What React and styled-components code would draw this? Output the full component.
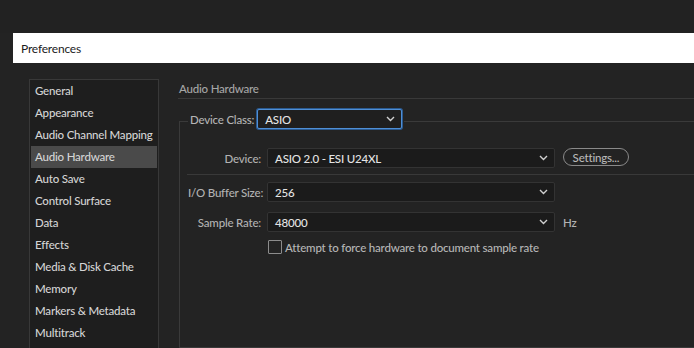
import React from "react";
import styled, { createGlobalStyle } from "styled-components";

const Global = createGlobalStyle`
  html, body { margin: 0; padding: 0; background: #222222; overflow: hidden; }
  body {
    font-family: Lato, "Noto Sans", sans-serif;
    font-size: 11.5px;
    font-weight: 500;
    letter-spacing: -0.2px;
  }
  * { box-sizing: border-box; }
`;

const Page = styled.div`
  width: 694px;
  height: 348px;
  overflow: hidden;
  background: #232323;
  display: flex;
  flex-direction: column;
`;

const TopStrip = styled.div`
  height: 33px;
  background: #222222;
  flex: none;
`;

const TitleBar = styled.div`
  height: 30px;
  margin-left: 13px;
  background: #ffffff;
  color: #1b1b1b;
  display: flex;
  align-items: center;
  padding-left: 8px;
  font-size: 12px;
  font-weight: 400;
  flex: none;
`;

const Body = styled.div`
  flex: 1;
  display: flex;
  padding: 16px 0 0 29px;
  gap: 20px;
  min-height: 0;
`;

const Sidebar = styled.ul`
  list-style: none;
  margin: 0;
  padding: 0 1px;
  width: 130px;
  flex: none;
  background: #1e1e1e;
  border: 1px solid #383838;
  border-bottom: none;
`;

const Item = styled.li`
  height: 22px;
  display: flex;
  align-items: center;
  padding-left: 4px;
  padding-bottom: 1px;
  color: #d4d4d4;
  background: ${(p) => (p.$active ? "#4a4a4a" : "transparent")};
  white-space: nowrap;
`;

const Main = styled.div`
  flex: 1;
  display: flex;
  flex-direction: column;
  min-width: 0;
`;

const Header = styled.div`
  color: #a6a6a6;
  height: 20px;
  display: flex;
  align-items: center;
  padding-bottom: 1px;
  border-bottom: 1px solid #393939;
  margin-left: -1px;
  padding-left: 1px;
`;

const Group = styled.fieldset`
  margin: 10px 0 0 0;
  padding: 0 0 0 8px;
  border: 1px solid #3a3a3a;
  border-right: none;
  width: 700px;
  flex: 1;
  min-width: 0;
`;

const Legend = styled.legend`
  padding: 0 2px 4px 2px;
  display: flex;
  align-items: center;
  gap: 3px;
  color: #b4b4b4;
`;

const Rows = styled.div`
  display: flex;
  flex-direction: column;
  padding-top: 15px;
`;

const Row = styled.div`
  display: flex;
  align-items: center;
  height: 20px;
  margin-bottom: ${(p) => p.$mb || 0}px;
`;

const Label = styled.span`
  width: 73px;
  text-align: right;
  color: #b2b2b2;
  margin-right: 6px;
  white-space: nowrap;
  flex: none;
`;

const Select = styled.div`
  width: ${(p) => p.$w}px;
  height: 20px;
  flex: none;
  display: flex;
  align-items: center;
  justify-content: space-between;
  padding: 0 6px 0 7px;
  background: ${(p) => (p.$focus ? "#1f1f1f" : "#1b1b1b")};
  border: 1px solid ${(p) => (p.$focus ? "#4f8fd6" : "#333333")};
  border-radius: 2px;
  color: #e4e4e4;
  box-shadow: ${(p) => (p.$focus ? "0 0 0 1px #2b5a90" : "none")};
`;

const Chevron = () => (
  <svg width="9" height="6" viewBox="0 0 9 6">
    <path d="M1 1 L4.5 4.5 L8 1" fill="none" stroke="#d0d0d0" strokeWidth="1.4" />
  </svg>
);

const Button = styled.button`
  margin-left: 8px;
  height: 18px;
  width: 66px;
  padding: 0;
  font: inherit;
  letter-spacing: inherit;
  color: #b8b8b8;
  background: transparent;
  border: 1.5px solid #8a8a8a;
  border-radius: 9px;
  margin-top: -2px;
`;

const Unit = styled.span`
  margin-left: 8px;
  color: #b2b2b2;
`;

const Separator = styled.div`
  height: 1px;
  background: #393939;
  margin: 6px 0 7px -1px;
`;

const CheckRow = styled.label`
  display: flex;
  align-items: center;
  gap: 3px;
  margin-left: 80px;
  margin-top: 8px;
  color: #b6b6b6;
`;

const Box = styled.span`
  width: 14px;
  height: 14px;
  border: 1px solid #8c8c8c;
  border-radius: 1px;
  flex: none;
`;

const items = [
  "General",
  "Appearance",
  "Audio Channel Mapping",
  "Audio Hardware",
  "Auto Save",
  "Control Surface",
  "Data",
  "Effects",
  "Media & Disk Cache",
  "Memory",
  "Markers & Metadata",
  "Multitrack",
];

export default function App() {
  return (
    <>
      <Global />
      <Page>
        <TopStrip />
        <TitleBar>Preferences</TitleBar>
        <Body>
          <Sidebar>
            {items.map((t) => (
              <Item key={t} $active={t === "Audio Hardware"}>
                {t}
              </Item>
            ))}
          </Sidebar>
          <Main>
            <Header>Audio Hardware</Header>
            <Group>
              <Legend>
                Device Class:
                <Select $w={145} $focus>
                  <span>ASIO</span>
                  <Chevron />
                </Select>
              </Legend>
              <Rows>
                <Row>
                  <Label>Device:</Label>
                  <Select $w={288}>
                    <span>ASIO 2.0 - ESI U24XL</span>
                    <Chevron />
                  </Select>
                  <Button>Settings...</Button>
                </Row>
                <Separator />
                <Row $mb={10}>
                  <Label>I/O Buffer Size:</Label>
                  <Select $w={288}>
                    <span>256</span>
                    <Chevron />
                  </Select>
                </Row>
                <Row>
                  <Label>Sample Rate:</Label>
                  <Select $w={288}>
                    <span>48000</span>
                    <Chevron />
                  </Select>
                  <Unit>Hz</Unit>
                </Row>
                <CheckRow>
                  <Box />
                  Attempt to force hardware to document sample rate
                </CheckRow>
              </Rows>
            </Group>
          </Main>
        </Body>
      </Page>
    </>
  );
}
